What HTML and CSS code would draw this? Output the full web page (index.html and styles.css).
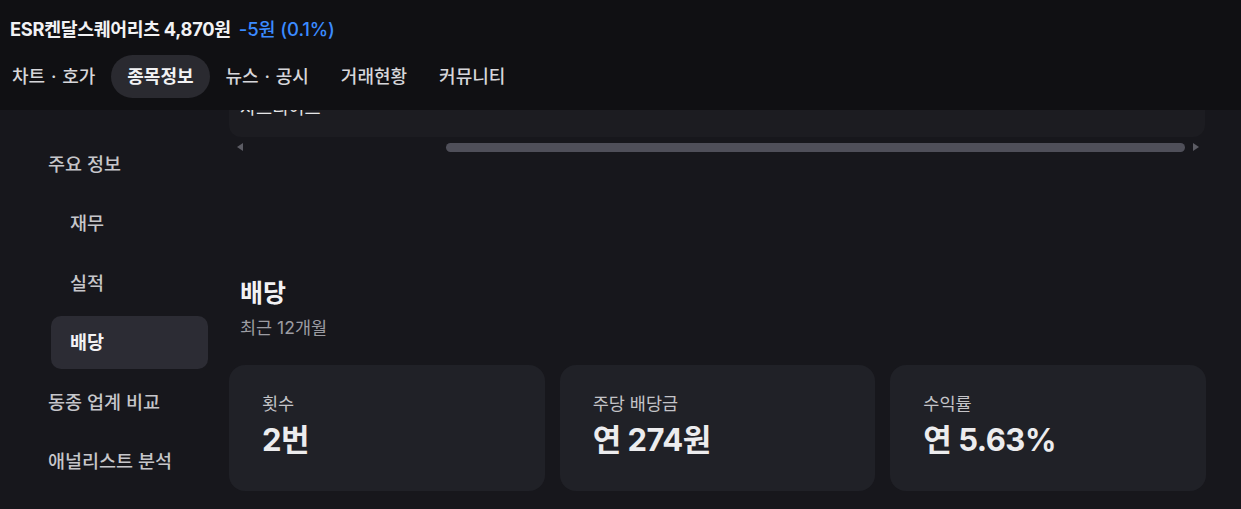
FILE: index.html
```html
<!DOCTYPE html>
<html lang="ko">
<head>
<meta charset="utf-8">
<link rel="stylesheet" href="styles.css">
</head>
<body>
<header class="header">
  <div class="title-row">
    <span class="stock-name">ESR켄달스퀘어리츠 4,870원</span>
    <span class="stock-change">-5원 (0.1%)</span>
  </div>
  <nav class="tabs">
    <span class="tab">차트 · 호가</span>
    <span class="tab tab-active">종목정보</span>
    <span class="tab">뉴스 · 공시</span>
    <span class="tab">거래현황</span>
    <span class="tab">커뮤니티</span>
  </nav>
</header>
<div class="page">
  <aside class="sidebar">
    <div class="side-item">주요 정보</div>
    <div class="side-item sub">재무</div>
    <div class="side-item sub">실적</div>
    <div class="side-item sub active">배당</div>
    <div class="side-item">동종 업계 비교</div>
    <div class="side-item">애널리스트 분석</div>
  </aside>
  <main class="main">
    <div class="table-box">
      <div class="table-text">차트리이트</div>
    </div>
    <div class="scrollbar">
      <span class="arrow arrow-left"></span>
      <div class="track"><div class="thumb"></div></div>
      <span class="arrow arrow-right"></span>
    </div>
    <section class="dividend">
      <h2 class="heading">배당</h2>
      <div class="subheading">최근 12개월</div>
      <div class="cards">
        <div class="card">
          <div class="card-label">횟수</div>
          <div class="card-value">2번</div>
        </div>
        <div class="card">
          <div class="card-label">주당 배당금</div>
          <div class="card-value">연 274원</div>
        </div>
        <div class="card">
          <div class="card-label">수익률</div>
          <div class="card-value">연 5.63%</div>
        </div>
      </div>
    </section>
  </main>
</div>
</body>
</html>
```

FILE: styles.css
```css
* { box-sizing: border-box; }
html, body { margin: 0; padding: 0; }
body {
  background: #17171c;
  font-family: Inter, "Noto Sans CJK KR", sans-serif;
  color: #e8e8ea;
  width: 1241px;
  height: 509px;
  overflow: hidden;
}
.header {
  background: #101013;
  height: 110px;
  padding-left: 10px;
  padding-top: 17px;
}
.title-row {
  display: flex;
  align-items: center;
  height: 24px;
  line-height: 24px;
  gap: 8px;
}
.stock-name {
  font-size: 18.3px;
  font-weight: 700;
  color: #f2f2f4;
  letter-spacing: -0.3px;
}
.stock-change {
  font-size: 18.5px;
  font-weight: 500;
  color: #3b8bff;
  letter-spacing: -0.1px;
}
.tabs {
  display: flex;
  margin-top: 14px;
  margin-left: -14px;
  gap: 0;
}
.tab {
  height: 43px;
  line-height: 43px;
  padding: 0 16px;
  border-radius: 22px;
  font-size: 18px;
  font-weight: 500;
  color: #d6d6da;
  word-spacing: 1px;
}
.tab-active {
  background: #2a2a30;
  color: #f2f2f4;
  font-weight: 700;
}
.page {
  display: flex;
}
.sidebar {
  width: 229px;
  padding: 28px 21px 0 29px;
  display: flex;
  flex-direction: column;
  gap: 6.4px;
}
.side-item {
  height: 53px;
  line-height: 53px;
  padding-left: 19px;
  font-size: 18.5px;
  font-weight: 500;
  color: #c6c6ca;
  border-radius: 10px;
}
.side-item.sub {
  margin-left: 22px;
}
.side-item.active {
  background: #2c2c34;
  color: #f2f2f4;
  font-weight: 700;
}
.main {
  width: 978px;
}
.table-box {
  width: 976px;
  height: 27px;
  background: #1c1c21;
  border-radius: 0 0 12px 12px;
  overflow: hidden;
  padding-left: 11px;
}
.table-text {
  margin-top: -12px;
  font-size: 17.5px;
  line-height: 20px;
  color: #e6e6e8;
}
.scrollbar {
  display: flex;
  align-items: center;
  height: 14px;
  margin-top: 3px;
  padding: 0 8px 0 8px;
}
.arrow {
  width: 0;
  height: 0;
  border-top: 4.5px solid transparent;
  border-bottom: 4.5px solid transparent;
}
.arrow-left { border-right: 6px solid #5c5c64; }
.arrow-right { border-left: 6px solid #5c5c64; }
.track {
  flex: 1;
  display: flex;
  justify-content: flex-end;
  padding: 0 8px;
}
.thumb {
  width: 739px;
  height: 9px;
  border-radius: 5px;
  background: #4f4f59;
}
.dividend {
  margin-top: 123px;
}
.heading {
  margin: 0;
  padding-left: 11px;
  font-size: 25px;
  line-height: 32px;
  font-weight: 700;
  color: #f2f2f4;
}
.subheading {
  margin-top: 8px;
  padding-left: 11px;
  font-size: 17.5px;
  line-height: 22px;
  color: #9c9ca2;
}
.cards {
  display: grid;
  grid-template-columns: repeat(3, 1fr);
  gap: 15px;
  margin-top: 26px;
  width: 977px;
}
.card {
  height: 126px;
  background: #202127;
  border-radius: 16px;
  padding: 28px 0 0 33px;
}
.card-label {
  font-size: 17.5px;
  line-height: 22px;
  color: #c4c4c8;
}
.card-value {
  margin-top: 6px;
  font-size: 31px;
  line-height: 38px;
  font-weight: 700;
  color: #ececee;
  letter-spacing: -0.5px;
}
```
